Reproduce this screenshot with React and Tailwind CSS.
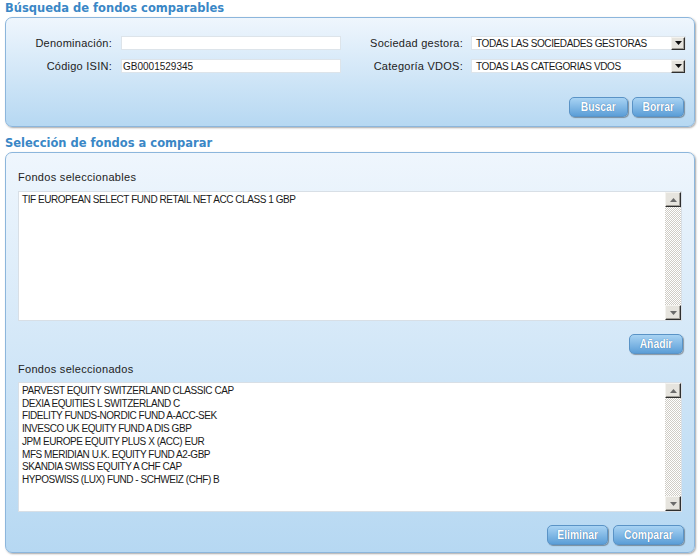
import React from "react";

const Tri = ({ up }) => (
  <svg width="7" height="4" viewBox="0 0 7 4">
    <path d={up ? "M0 4 L3.5 0 L7 4Z" : "M0 0 L7 0 L3.5 4Z"} fill="#6a6a6a" />
  </svg>
);

const ScrollBtn = ({ up }) => (
  <div className="flex h-[15px] w-[16px] items-center justify-center border border-t-[#f4f3ef] border-l-[#f4f3ef] border-r-[#2f2f2f] border-b-[#2f2f2f] bg-[#e6e4de] shadow-[inset_-1px_-1px_0_#a19e97]">
    <Tri up={up} />
  </div>
);

const Scrollbar = () => (
  <div className="flex w-[16px] flex-col">
    <ScrollBtn up />
    <div className="flex-1 bg-[repeating-conic-gradient(#cfccc5_0_25%,#ffffff_0_50%)] bg-[length:2px_2px]" />
    <ScrollBtn />
  </div>
);

const Listbox = ({ items, className }) => (
  <div className={"flex h-[130px] w-[664px] border border-[#d8dfe6] bg-white " + className}>
    <div className="flex-1 pl-[3px] pt-[2px] text-[10px] leading-[12.7px] tracking-[-0.45px] text-[#1a1a1a]">
      {items.map((t) => (
        <div key={t} className="whitespace-nowrap">{t}</div>
      ))}
    </div>
    <Scrollbar />
  </div>
);

const Btn = ({ children, className }) => (
  <button
    className={
      "flex h-[20px] items-center justify-center rounded-[5px] border border-[#5a93c6] bg-linear-to-b from-[#a8d3f3] to-[#5b9ed7] text-[12px] font-bold text-white shadow-[1px_1px_1px_rgba(0,0,0,0.35)] " +
      className
    }
  >
    <span className="inline-block scale-x-[0.86] [text-shadow:0_0_1px_#2a639a]">{children}</span>
  </button>
);

const Input = ({ value, className }) => (
  <div className={"flex h-[14px] items-center border border-[#dde4ea] bg-white pl-[1px] text-[10px] text-[#1a1a1a] " + className}>
    {value}
  </div>
);

const Select = ({ value }) => (
  <div className="flex h-[14px] w-[215px] items-center border border-[#dde4ea] bg-white">
    <div className="flex-1 pl-[4px] text-[10px] tracking-[-0.4px] text-[#1a1a1a] whitespace-nowrap">{value}</div>
    <div className="flex h-[13px] w-[14px] items-center justify-center border border-t-[#f4f3ef] border-l-[#f4f3ef] border-r-[#2f2f2f] border-b-[#2f2f2f] bg-[#e6e4de] shadow-[inset_-1px_-1px_0_#a19e97]">
      <svg width="7" height="4" viewBox="0 0 7 4">
        <path d="M0 0 L7 0 L3.5 4Z" fill="#111" />
      </svg>
    </div>
  </div>
);

const Title = ({ children, className = "" }) => (
  <h2
    className={
      "h-[17px] pt-[1px] text-[11.5px] leading-[15px] font-bold text-[#3a87c6] font-['DejaVu_Sans',Verdana,sans-serif] " +
      className
    }
  >
    {children}
  </h2>
);

const panelCls =
  "rounded-[7px] border border-[#8cb6dc] bg-linear-to-b from-[#eff6fd] to-[#b6d8f2] shadow-[1px_1px_2px_rgba(0,0,0,0.35)]";

export default function App() {
  const selected = [
    "PARVEST EQUITY SWITZERLAND CLASSIC CAP",
    "DEXIA EQUITIES L SWITZERLAND C",
    "FIDELITY FUNDS-NORDIC FUND A-ACC-SEK",
    "INVESCO UK EQUITY FUND A DIS GBP",
    "JPM EUROPE EQUITY PLUS X (ACC) EUR",
    "MFS MERIDIAN U.K. EQUITY FUND A2-GBP",
    "SKANDIA SWISS EQUITY A CHF CAP",
    "HYPOSWISS (LUX) FUND - SCHWEIZ (CHF) B",
  ];
  return (
    <div className="h-[557px] w-[700px] bg-white px-[5px] font-['Liberation_Sans',Arial,sans-serif] text-[#222]">
      <Title>Búsqueda de fondos comparables</Title>
      <div className={"h-[110px] pt-[18px] " + panelCls}>
        <div className="flex h-[14px] items-center text-[11px] tracking-[0.25px]">
          <span className="w-[106px] text-right">Denominación:</span>
          <Input value="" className="ml-[9px] w-[220px]" />
          <span className="flex-1 text-right">Sociedad gestora:</span>
          <div className="ml-[8px] mr-[8px]">
            <Select value="TODAS LAS SOCIEDADES GESTORAS" />
          </div>
        </div>
        <div className="mt-[9px] flex h-[14px] items-center text-[11px] tracking-[0.25px]">
          <span className="w-[106px] text-right">Código ISIN:</span>
          <Input value="GB0001529345" className="ml-[9px] w-[220px] tracking-normal" />
          <span className="flex-1 text-right">Categoría VDOS:</span>
          <div className="ml-[8px] mr-[8px] tracking-normal">
            <Select value="TODAS LAS CATEGORIAS VDOS" />
          </div>
        </div>
        <div className="mt-[24px] flex justify-end gap-[4px] pr-[10px]">
          <Btn className="w-[59px]">Buscar</Btn>
          <Btn className="w-[52px]">Borrar</Btn>
        </div>
      </div>

      <Title className="mt-[8px]">Selección de fondos a comparar</Title>
      <div className={"h-[401px] px-[12px] pt-[17px] " + panelCls}>
        <div className="h-[14px] text-[11px] leading-[14px] tracking-[0.3px]">Fondos seleccionables</div>
        <Listbox className="mt-[7px]" items={["TIF EUROPEAN SELECT FUND RETAIL NET ACC CLASS 1 GBP"]} />
        <div className="-mr-[1px] mt-[13px] flex justify-end">
          <Btn className="w-[54px]">Añadir</Btn>
        </div>
        <div className="mt-[8px] h-[14px] text-[11px] leading-[14px] tracking-[0.3px]">Fondos seleccionados</div>
        <Listbox className="mt-[6px]" items={selected} />
        <div className="-mr-[2px] mt-[13px] flex justify-end gap-[5px]">
          <Btn className="w-[61px]">Eliminar</Btn>
          <Btn className="w-[71px]">Comparar</Btn>
        </div>
      </div>
    </div>
  );
}
